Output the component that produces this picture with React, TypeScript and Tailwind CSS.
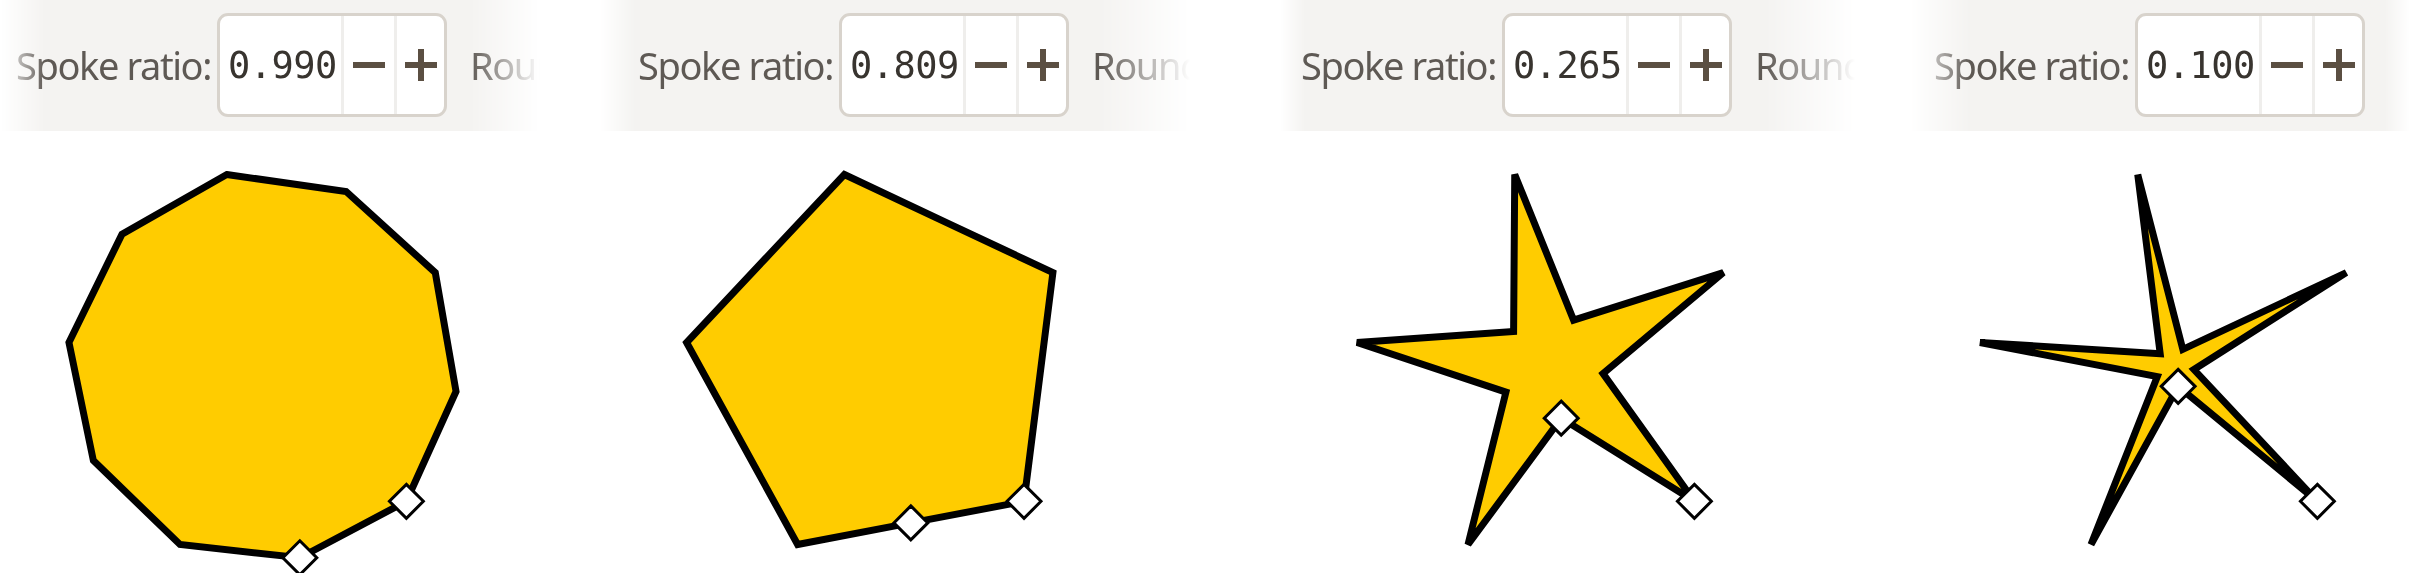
import React from "react";

const R = 196.4;
const TH = -100.8;
const CY = 366.5 - 130;

function starPoints(cx: number, cy: number, ratio: number): [number, number][] {
  const pts: [number, number][] = [];
  for (let k = 0; k < 5; k++) {
    const a = ((TH + k * 72) * Math.PI) / 180;
    const b = ((TH + k * 72 + 36) * Math.PI) / 180;
    pts.push([cx + R * Math.cos(a), cy + R * Math.sin(a)]);
    pts.push([cx + ratio * R * Math.cos(b), cy + ratio * R * Math.sin(b)]);
  }
  return pts;
}

function Diamond({ x, y }: { x: number; y: number }) {
  const h = 17;
  return (
    <polygon
      points={`${x},${y - h} ${x + h},${y} ${x},${y + h} ${x - h},${y}`}
      fill="#ffffff"
      stroke="#000000"
      strokeWidth={3}
      strokeLinejoin="miter"
    />
  );
}

function Star({ width, cx, ratio }: { width: number; cx: number; ratio: number }) {
  const pts = starPoints(cx, CY, ratio);
  const d = pts.map((p) => `${p[0].toFixed(2)},${p[1].toFixed(2)}`).join(" ");
  return (
    <svg width={width} height={443} viewBox={`0 0 ${width} 443`} className="block">
      <polygon points={d} fill="#ffcc00" stroke="#000000" strokeWidth={7} strokeLinejoin="miter" strokeMiterlimit={4} />
      <Diamond x={pts[5][0]} y={pts[5][1]} />
      <Diamond x={pts[4][0]} y={pts[4][1]} />
    </svg>
  );
}

function MinusIcon() {
  return (
    <svg width="32" height="32" viewBox="0 0 32 32" className="block">
      <rect x="0" y="13" width="32" height="6" fill="#5b4f42" />
    </svg>
  );
}

function PlusIcon() {
  return (
    <svg width="32" height="32" viewBox="0 0 32 32" className="block">
      <rect x="0" y="13" width="32" height="6" fill="#5b4f42" />
      <rect x="13" y="0" width="6" height="32" fill="#5b4f42" />
    </svg>
  );
}

function Spin({ value }: { value: string }) {
  return (
    <div className="flex h-[104px] w-[230px] shrink-0 items-stretch overflow-hidden rounded-[11px] border-[3px] border-[#d8d3cc] bg-white">
      <div className="flex w-[121px] items-center pl-[8px] font-['DejaVu_Sans_Mono',monospace] text-[37px] leading-none tracking-[-0.5px] text-[#38342f]">
        {value}
      </div>
      <div className="flex w-[53px] items-center justify-center border-l-[3px] border-[#efeeec]">
        <MinusIcon />
      </div>
      <div className="flex flex-1 items-center justify-center border-l-[3px] border-[#efeeec]">
        <PlusIcon />
      </div>
    </div>
  );
}

const labelCls =
  "w-[201px] shrink-0 font-['Noto_Sans',sans-serif] text-[38px] leading-none tracking-[-1.4px] text-[#5e5954]";
const tailCls =
  "ml-[23px] whitespace-nowrap font-['Noto_Sans',sans-serif] text-[38px] leading-none tracking-[-1.4px] text-[#5e5954]";

export default function App() {
  return (
    <div className="flex h-[573px] w-[2410px] overflow-hidden bg-white">
      {/* Panel 1 */}
      <div className="flex w-[600px] shrink-0 flex-col">
        <div className="flex h-[131px] items-center bg-[#f4f3f1] pl-[16px] [mask-image:linear-gradient(to_right,transparent_0px,black_45px,black_470px,transparent_540px)]">
          <span className={labelCls}>Spoke ratio:</span>
          <Spin value="0.990" />
          <span className={tailCls}>Round</span>
        </div>
        <Star width={600} cx={263.4} ratio={0.99} />
      </div>
      {/* Panel 2 */}
      <div className="flex w-[680px] shrink-0 flex-col">
        <div className="flex h-[131px] items-center bg-[#f4f3f1] pl-[38px] [mask-image:linear-gradient(to_right,transparent_0px,black_35px,black_500px,transparent_590px)]">
          <span className={labelCls}>Spoke ratio:</span>
          <Spin value="0.809" />
          <span className={tailCls}>Round</span>
        </div>
        <Star width={680} cx={881.0 - 600} ratio={0.809} />
      </div>
      {/* Panel 3 */}
      <div className="flex w-[630px] shrink-0 flex-col">
        <div className="flex h-[131px] items-center bg-[#f4f3f1] pl-[21px] [mask-image:linear-gradient(to_right,transparent_0px,black_25px,black_485px,transparent_575px)]">
          <span className={labelCls}>Spoke ratio:</span>
          <Spin value="0.265" />
          <span className={tailCls}>Rounded:</span>
        </div>
        <Star width={630} cx={1551.4 - 1280} ratio={0.265} />
      </div>
      {/* Panel 4 */}
      <div className="flex w-[500px] shrink-0 flex-col">
        <div className="flex h-[131px] items-center bg-[#f4f3f1] pl-[24px] [mask-image:linear-gradient(to_right,transparent_0px,black_60px,black_475px,transparent_500px)]">
          <span className={labelCls}>Spoke ratio:</span>
          <Spin value="0.100" />
        </div>
        <Star width={500} cx={2174.5 - 1910} ratio={0.1} />
      </div>
    </div>
  );
}
